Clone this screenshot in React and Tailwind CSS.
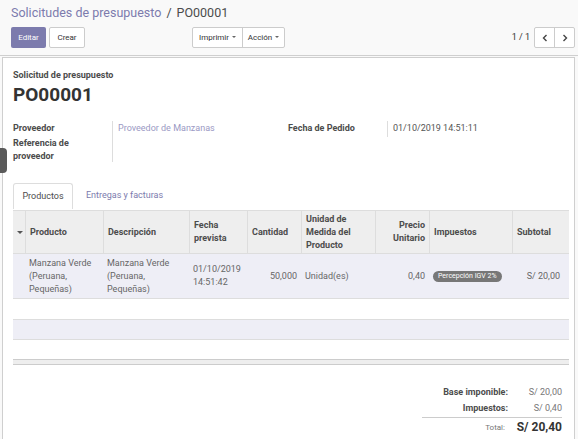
import React from 'react'

const font = { fontFamily: 'Roboto, "Liberation Sans", sans-serif' }

function Caret() {
  return <span className="ml-[3px] inline-block h-0 w-0 border-x-[2px] border-t-[2px] border-x-transparent border-t-[#666] align-middle" />
}

export default function App() {
  const cols = [
    { label: '', w: 'w-[12px]' },
    { label: 'Producto', w: 'w-[78px]' },
    { label: 'Descripción', w: 'w-[86px]' },
    { label: 'Fecha prevista', w: 'w-[58px]' },
    { label: 'Cantidad', w: 'w-[54px]' },
    { label: 'Unidad de Medida del Producto', w: 'w-[74px]' },
    { label: 'Precio Unitario', w: 'w-[54px]', right: true },
    { label: 'Impuestos', w: 'w-[83px]' },
    { label: 'Subtotal', w: 'w-[57px]' },
  ]

  return (
    <div className="h-[439px] w-[578px] overflow-hidden bg-[#f9f9f9] text-[#4c4c4c]" style={font}>
      {/* control panel */}
      <div className="h-[56px] border-b border-[#cfcfcf] bg-[#f9f9f9] pl-[11px] pr-[3px]">
        <div className="pt-[3px] text-[12.5px] leading-[20px]">
          <span className="text-[#7c7bad]">Solicitudes de presupuesto</span>
          <span className="mx-[5px]">/</span>
          <span>PO00001</span>
        </div>
        <div className="mt-[4px] flex h-[21px] items-center">
          <button className="h-[21px] w-[35px] rounded-[2px] bg-[#7c7bad] text-[8px] text-white">Editar</button>
          <button className="ml-[3px] h-[21px] w-[36px] rounded-[2px] border border-[#ccc] bg-white text-[8px] text-[#333]">Crear</button>
          <div className="ml-[107px] flex h-[21px] rounded-[2px] border border-[#ccc] bg-white text-[8px] text-[#333]">
            <button className="w-[50px] border-r border-[#ccc]">Imprimir<Caret /></button>
            <button className="w-[41px]">Acción<Caret /></button>
          </div>
          <div className="ml-auto mr-[4px] text-[9px] text-[#333]">1 / 1</div>
          <div className="flex h-[21px] rounded-[2px] border border-[#ccc] bg-white text-[#444]">
            <button className="flex w-[20px] items-center justify-center border-r border-[#ccc]">
              <svg width="6" height="8" viewBox="0 0 6 8"><path d="M4.5 1 L1.5 4 L4.5 7" stroke="#444" strokeWidth="1.4" fill="none" /></svg>
            </button>
            <button className="flex w-[19px] items-center justify-center">
              <svg width="6" height="8" viewBox="0 0 6 8"><path d="M1.5 1 L4.5 4 L1.5 7" stroke="#444" strokeWidth="1.4" fill="none" /></svg>
            </button>
          </div>
        </div>
      </div>

      {/* sheet */}
      <div className="relative">
        <div className="absolute left-0 top-[91px] h-[25px] w-[7px] rounded-r-[4px] bg-[#5a5a5a]" />
        <div className="ml-[2px] mr-[3px] mt-[1px] h-[400px] border border-[#cfcfcf] bg-white pl-[10px] pr-[4px]">
          <div className="pt-[11px] text-[9px] font-bold leading-[12px] text-[#4c4c4c]">Solicitud de presupuesto</div>
          <div className="mt-[2px] text-[19px] font-bold leading-[24px] text-[#333]">PO00001</div>

          <div className="mt-[14px] flex text-[9px] leading-[13px]">
            <div className="flex w-[275px]">
              <div className="w-[99px] font-bold">
                <div className="h-[16px] pt-[1px]">Proveedor</div>
                <div>Referencia de<br />proveedor</div>
              </div>
              <div className="h-[41px] border-l border-[#ddd] pl-[5px] pt-[1px] text-[#9a99c4]">Proveedor de Manzanas</div>
            </div>
            <div className="flex">
              <div className="w-[99px] pt-[1px] font-bold">Fecha de Pedido</div>
              <div className="h-[16px] border-l border-[#ddd] pl-[5px] pt-[1px] text-[#555]">01/10/2019 14:51:11</div>
            </div>
          </div>

          {/* tabs */}
          <div className="mt-[20px] flex h-[26px] items-end text-[9px]">
            <div className="flex h-[26px] w-[60px] items-center justify-center rounded-t-[3px] border border-b-0 border-[#ddd] bg-white text-[#4c4c4c]">Productos</div>
            <div className="flex h-[26px] items-center pl-[13px] text-[#7c7bad]">Entregas y facturas</div>
          </div>

          {/* table */}
          <div className="mt-[1px] w-[556px] text-[9px]">
            <div className="flex h-[44px] border-y border-[#ddd] bg-[#eeeeee] font-bold leading-[13px] text-[#4c4c4c]">
              {cols.map((c, i) => (
                <div key={i} className={`${c.w} flex items-center ${i > 0 ? 'border-l border-[#ddd]' : ''} ${c.right ? 'justify-end text-right' : ''} px-[4px]`}>
                  {i === 0 ? <span className="h-0 w-0 border-x-[3px] border-t-[3px] border-x-transparent border-t-[#555]" /> : c.label}
                </div>
              ))}
            </div>
            <div className="flex h-[45px] border-b border-[#ddd] bg-[#eeeef6] leading-[13px] text-[#666]">
              <div className="w-[12px]" />
              <div className="flex w-[78px] items-center px-[4px]">Manzana Verde (Peruana, Pequeñas)</div>
              <div className="flex w-[86px] items-center px-[4px]">Manzana Verde (Peruana, Pequeñas)</div>
              <div className="flex w-[58px] items-center px-[4px]">01/10/2019 14:51:42</div>
              <div className="flex w-[54px] items-center justify-end px-[4px]">50,000</div>
              <div className="flex w-[74px] items-center px-[4px]">Unidad(es)</div>
              <div className="flex w-[54px] items-center justify-end px-[4px]">0,40</div>
              <div className="flex w-[83px] items-center px-[4px]">
                <span className="rounded-full bg-[#777] px-[5px] text-[7px] leading-[11px] text-white">Percepción IGV 2%</span>
              </div>
              <div className="flex w-[57px] items-center justify-end px-[9px]">S/ 20,00</div>
            </div>
            <div className="h-[20px]" />
            <div className="h-[21px] border-y border-[#ddd] bg-[#eeeef6]" />
            <div className="h-[19px]" />
            <div className="h-[6px] border-y border-[#ccc] bg-[#eeeeee]" />
          </div>

          {/* totals */}
          <div className="mt-[20px] flex justify-end pr-[8px] text-[9px]">
            <div className="w-[140px]">
              <div className="flex h-[16px] items-center">
                <div className="flex-1 text-right font-bold">Base imponible:</div>
                <div className="w-[54px] text-right text-[#777]">S/ 20,00</div>
              </div>
              <div className="flex h-[16px] items-center">
                <div className="flex-1 text-right font-bold">Impuestos:</div>
                <div className="w-[54px] text-right text-[#777]">S/ 0,40</div>
              </div>
              <div className="flex h-[19px] items-center border-t border-[#ccc]">
                <div className="flex-1 pr-[3px] pt-[2px] text-right text-[8px] text-[#777]">Total:</div>
                <div className="w-[54px] text-right text-[12px] font-bold text-[#333]">S/ 20,40</div>
              </div>
            </div>
          </div>
        </div>
      </div>
    </div>
  )
}
